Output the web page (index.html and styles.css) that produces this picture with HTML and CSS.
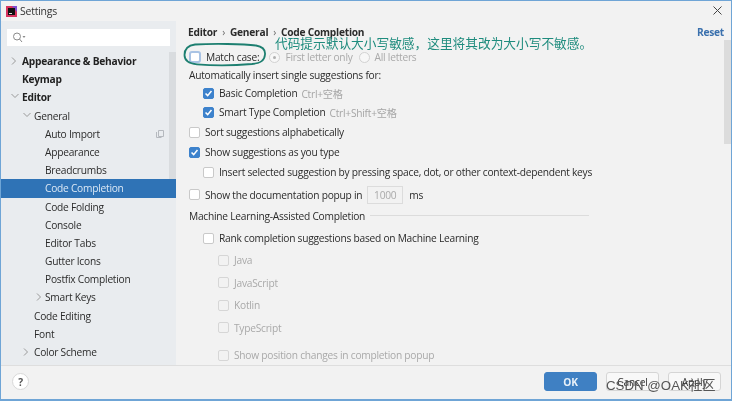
FILE: index.html
```html
<!DOCTYPE html>
<html lang="en">
<head>
<meta charset="utf-8">
<title>Settings</title>
<link rel="stylesheet" href="styles.css">
</head>
<body>
<div class="window">
  <header class="titlebar">
    <svg class="app-icon" width="11" height="11" viewBox="0 0 11 11"><rect width="11" height="11" fill="#d8345f"/><path d="M6 0h5v6z" fill="#7b4bd0"/><rect x="2" y="2" width="7" height="7" fill="#111"/><rect x="3" y="7" width="3" height="1" fill="#ddd"/></svg>
    <span class="title">Settings</span>
    <svg class="close" width="9" height="9" viewBox="0 0 9 9"><path d="M.5.5l8 8M8.500.5l-8 8" stroke="#444" stroke-width="1" fill="none"/></svg>
  </header>
  <div class="main">
    <aside class="sidebar">
      <div class="search">
        <svg width="14" height="11" viewBox="0 0 14 11"><circle cx="5" cy="4.500" r="3.500" fill="none" stroke="#8a8a8a"/><path d="M7.500 7l2.500 3" stroke="#8a8a8a"/><path d="M10.500 4h3l-1.500 2z" fill="#8a8a8a"/></svg>
      </div>
      <nav class="tree">
        <div class="thumb"></div>
        <div class="node bold lv0"><svg class="arrow" width="6" height="8" viewBox="0 0 6 8"><path d="M1 .5L4.500 4 1 7.500" fill="none" stroke="#999"/></svg>Appearance &amp; Behavior</div>
        <div class="node bold lv0">Keymap</div>
        <div class="node bold lv0"><svg class="arrow" width="8" height="6" viewBox="0 0 8 6"><path d="M.5 1L4 4.500 7.500 1" fill="none" stroke="#999"/></svg>Editor</div>
        <div class="node lv1"><svg class="arrow" width="8" height="6" viewBox="0 0 8 6"><path d="M.5 1L4 4.500 7.500 1" fill="none" stroke="#999"/></svg>General</div>
        <div class="node lv2">Auto Import<svg class="copy" width="8" height="8" viewBox="0 0 8 8"><path d="M2.500.5h5v6h-5zM.5 2v5.500h5" fill="none" stroke="#b5b9be"/></svg></div>
        <div class="node lv2">Appearance</div>
        <div class="node lv2">Breadcrumbs</div>
        <div class="node lv2 selected">Code Completion</div>
        <div class="node lv2">Code Folding</div>
        <div class="node lv2">Console</div>
        <div class="node lv2">Editor Tabs</div>
        <div class="node lv2">Gutter Icons</div>
        <div class="node lv2">Postfix Completion</div>
        <div class="node lv2"><svg class="arrow" width="6" height="8" viewBox="0 0 6 8"><path d="M1 .5L4.500 4 1 7.500" fill="none" stroke="#999"/></svg>Smart Keys</div>
        <div class="node lv1">Code Editing</div>
        <div class="node lv1">Font</div>
        <div class="node lv1"><svg class="arrow" width="6" height="8" viewBox="0 0 6 8"><path d="M1 .5L4.500 4 1 7.500" fill="none" stroke="#999"/></svg>Color Scheme</div>
      </nav>
    </aside>
    <section class="content">
      <div class="crumbs">
        <div class="crumb-path"><b>Editor</b><i>›</i><b>General</b><i>›</i><b>Code Completion</b></div>
        <a class="reset">Reset</a>
      </div>
      <div class="scroll-thumb"></div>
      <div class="row r-match"><span class="cb focus"></span><span>Match case:</span><span class="radio on"></span><span class="dim">First letter only</span><span class="radio next"></span><span class="dim">All letters</span></div>
      <div class="row r-auto">Automatically insert single suggestions for:</div>
      <div class="row in1 r-basic"><span class="cb checked"><svg width="13" height="13" viewBox="0 0 13 13"><path d="M3 6.500l2.500 2.500L10 3.500" fill="none" stroke="#fff" stroke-width="1.800"/></svg></span><span>Basic Completion</span><span class="hint">Ctrl+空格</span></div>
      <div class="row in1 r-20"><span class="cb checked"><svg width="13" height="13" viewBox="0 0 13 13"><path d="M3 6.500l2.500 2.500L10 3.500" fill="none" stroke="#fff" stroke-width="1.800"/></svg></span><span>Smart Type Completion</span><span class="hint">Ctrl+Shift+空格</span></div>
      <div class="row r-20"><span class="cb"></span><span>Sort suggestions alphabetically</span></div>
      <div class="row r-20"><span class="cb checked"><svg width="13" height="13" viewBox="0 0 13 13"><path d="M3 6.500l2.500 2.500L10 3.500" fill="none" stroke="#fff" stroke-width="1.800"/></svg></span><span>Show suggestions as you type</span></div>
      <div class="row in1 r-20"><span class="cb"></span><span>Insert selected suggestion by pressing space, dot, or other context-dependent keys</span></div>
      <div class="row r-doc"><span class="cb"></span><span>Show the documentation popup in</span><span class="num">1000</span><span>ms</span></div>
      <div class="row r-ml"><span>Machine Learning-Assisted Completion</span><span class="rule"></span></div>
      <div class="row in1 r-rank"><span class="cb"></span><span>Rank completion suggestions based on Machine Learning</span></div>
      <div class="row in2 r-lang dim"><span class="cb off"></span><span>Java</span></div>
      <div class="row in2 r-lang dim"><span class="cb off"></span><span>JavaScript</span></div>
      <div class="row in2 r-lang dim"><span class="cb off"></span><span>Kotlin</span></div>
      <div class="row in2 r-lang dim"><span class="cb off"></span><span>TypeScript</span></div>
      <div class="row in2 r-pos dim"><span class="cb off"></span><span>Show position changes in completion popup</span></div>
    </section>
  </div>
  <footer class="footer">
    <span class="help">?</span>
    <div class="buttons">
      <button class="btn primary">OK</button>
      <button class="btn">Cancel</button>
      <button class="btn">Apply</button>
    </div>
  </footer>
  <svg class="ellipse" width="84" height="24" viewBox="0 0 84 24"><path d="M12 1.500C30 .5 60 .8 73 2.500c7 1.200 9.500 4 9 9-.5 6-4 8.500-13 9.500-18 1.500-40 1.500-55 .3C5 20.500 1.500 17 1.500 12 1.500 6 5 2.500 12 1.500z" fill="none" stroke="#1d7f70" stroke-width="1.800"/></svg>
  <div class="note">代码提示默认大小写敏感，这里将其改为大小写不敏感。</div>
  <div class="watermark">CSDN @OAK社区</div>
</div>
</body>
</html>
```
FILE: styles.css
```css
* { box-sizing: border-box; }
html, body { margin: 0; padding: 0; }
body { width: 732px; height: 401px; overflow: hidden; font-family: "Open Sans", "Noto Sans CJK SC", sans-serif; font-size: 10.200px; letter-spacing: -.24px; color: #2b2b2b; }
.window { position: relative; width: 732px; height: 401px; background: #f2f2f2; border: 1px solid #6fa5d6; border-bottom-width: 2px; display: flex; flex-direction: column; filter: blur(.4px); }
.titlebar { height: 20px; flex: none; display: flex; align-items: center; padding: 0 9px 0 5px; }
.app-icon { margin-right: 3px; }
.title { font-size: 10.500px; color: #333; flex: 1; }
.close { margin-top: -2px; }
.main { flex: 1; display: flex; min-height: 0; border-bottom: 1px solid #dedede; }
.sidebar { width: 175px; flex: none; background: #e9ecef; padding-top: 7px; overflow: hidden; }
.search { height: 17px; margin: 1px 6px 0 6px; background: #fff; display: flex; align-items: center; padding-left: 5px; }
.tree { position: relative; margin-top: 6px; }
.thumb { position: absolute; right: 0; top: 0; width: 7px; height: 128px; background: #d9dcdf; }
.node { position: relative; height: 18.200px; line-height: 18.200px; white-space: nowrap; }
.bold { font-weight: 700; color: #222; }
.lv0 { padding-left: 21px; }
.lv1 { padding-left: 33px; }
.lv2 { padding-left: 44px; }
.arrow { position: absolute; left: 10px; top: 5px; }
.lv1 .arrow { left: 22px; }
.lv2 .arrow { left: 35px; }
.copy { position: absolute; left: 155px; top: 5px; }
.selected { background: #2f73b6; color: #dbe8f5; }
.content { flex: 1; position: relative; padding: 0 0 0 12px; overflow: hidden; }
.crumbs { height: 22px; display: flex; align-items: center; padding: 0 7px 0 0; justify-content: space-between; }
.crumb-path { display: flex; align-items: center; }
.crumb-path i { font-style: normal; margin: 0 5px; color: #666; font-size: 10px; }
.reset { font-weight: 700; color: #3a70ad; }
.scroll-thumb { position: absolute; right: 0; top: 19px; width: 7px; height: 104px; background: #dcdcdc; }
.row { display: flex; align-items: center; white-space: nowrap; gap: 5px; height: 20px; }
.in1 { padding-left: 14px; }
.in2 { padding-left: 29px; }
.dim { color: #a9a9a9; }
.hint { color: #a5a5a5; margin-left: -1px; }
.cb { width: 11px; height: 11px; flex: none; background: #fff; border: 1px solid #c9c9c9; border-radius: 2px; display: inline-flex; align-items: center; justify-content: center; position: relative; margin-left: 1px; }
.cb svg { position: absolute; width: 11px; height: 11px; left: -1px; top: -1px; }
.cb.focus { border: 2px solid #a9c3e4; width: 12px; height: 12px; margin-left: 1px; border-radius: 3px; }
.cb.checked { background: #3d82cc; border-color: #3d82cc; }
.cb.off { background: #f2f2f2; border-color: #d6d6d6; }
.radio { width: 11px; height: 11px; border: 1px solid #d2d2d2; border-radius: 50%; background: #f7f7f7; flex: none; position: relative; margin-left: 5px; }
.radio.next { margin-left: 1px; }
.radio.on::after { content: ""; position: absolute; left: 3px; top: 3px; width: 3px; height: 3px; border-radius: 50%; background: #b0b0b0; }
.r-match { height: 18px; margin-top: 5px; }
.r-auto { height: 18px; padding-left: 1px; }
.r-basic { height: 18px; }
.r-20 { height: 20px; }
.r-doc { height: 25px; }
.num { width: 36px; height: 18px; border: 1px solid #dcdcdc; background: #f2f2f2; color: #aaa; text-align: center; line-height: 16px; margin-right: 1px; }
.r-ml { height: 17px; padding-left: 1px; }
.rule { width: 219px; height: 1px; background: #dcdcdc; }
.r-rank { height: 25px; padding-top: 3px; }
.r-lang { height: 22.500px; }
.r-pos { height: 32px; }
.footer { height: 33px; flex: none; display: flex; align-items: center; justify-content: space-between; padding: 0 10px 2px 11px; }
.help { width: 17px; height: 17px; background: #fff; border: 1px solid #d8d8d8; border-radius: 50%; display: flex; align-items: center; justify-content: center; font-weight: 700; color: #555; }
.buttons { display: flex; gap: 9px; }
.btn { width: 53px; height: 19px; padding: 0; border: 1px solid #d5d5d5; border-radius: 3px; background: #f8f8f8; font: 10.200px "Open Sans", sans-serif; letter-spacing: -.2px; color: #333; }
.btn.primary { background: #3f80c3; border-color: #3f80c3; color: #e8f0f8; font-weight: 700; }
.ellipse { position: absolute; left: 182px; top: 42px; }
.note { position: absolute; left: 274px; top: 34px; font-size: 12.700px; letter-spacing: 0; line-height: 16px; color: #1f8c7e; white-space: nowrap; }
.watermark { position: absolute; left: 605px; top: 374px; font: 13.300px "Liberation Sans", "Noto Sans CJK SC", sans-serif; letter-spacing: 0; color: #555; white-space: nowrap; }
```
